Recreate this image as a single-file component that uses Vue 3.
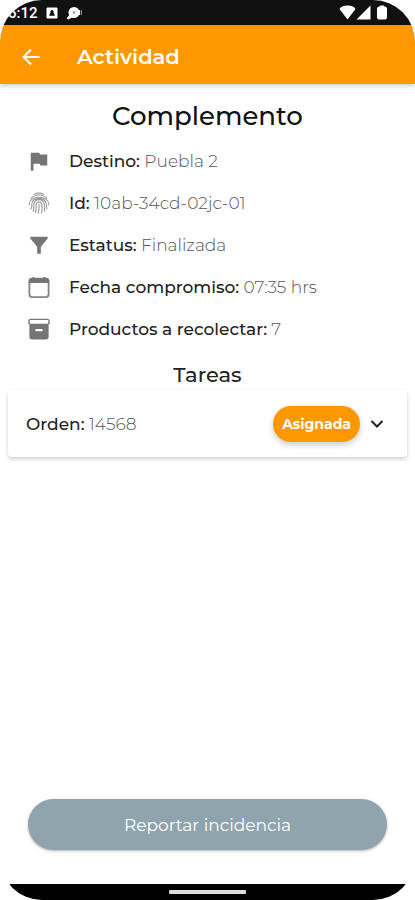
<script setup>
import { ref } from 'vue'

const details = [
  { icon: 'flag', label: 'Destino:', value: 'Puebla 2' },
  { icon: 'finger', label: 'Id:', value: '10ab-34cd-02jc-01' },
  { icon: 'filter', label: 'Estatus:', value: 'Finalizada' },
  { icon: 'calendar', label: 'Fecha compromiso:', value: '07:35 hrs' },
  { icon: 'box', label: 'Productos a recolectar:', value: '7' }
]

const tasks = [{ order: '14568', status: 'Asignada' }]

const opened = ref(null)

const toggle = (order) => {
  opened.value = opened.value === order ? null : order
}
</script>

<template>
  <div class="phone">
    <div class="status-bar">
      <span class="time">6:12</span>
      <svg class="status-icon" viewBox="0 0 12 12" aria-hidden="true">
        <path fill="#fff" fill-rule="evenodd" d="M1.500 0.500h9a1 1 0 0 1 1 1v9a1 1 0 0 1-1 1h-9a1 1 0 0 1-1-1v-9a1 1 0 0 1 1-1zM6 3L4.600 5.200 3 8.800h6L7.400 5.200z" />
        <circle cx="6" cy="4.500" r="1.500" fill="#111" />
      </svg>
      <svg class="status-icon wide" viewBox="0 0 16 14" aria-hidden="true">
        <circle cx="8" cy="6.500" r="5.500" fill="#fff" />
        <path fill="#fff" d="M4 8l-3.500 4.500 2 1L7 11zM12 4h2v5h-2z" />
        <circle cx="8" cy="6.500" r="1.200" fill="#999" />
        <path stroke="#aaa" d="M15.300 4v5" />
      </svg>
      <div class="signals">
        <svg width="17" height="15" viewBox="0 0 17 15" aria-hidden="true">
          <path fill="#fff" d="M8.500 14.500L0.500 4Q2 0.500 8.500 0.500T16.500 4z" />
        </svg>
        <svg width="15" height="15" viewBox="0 0 15 15" aria-hidden="true">
          <path fill="#fff" d="M14.500 0.500v14H0.500z" />
        </svg>
        <svg class="battery" width="10" height="15" viewBox="0 0 10 15" aria-hidden="true">
          <path fill="#fff" d="M3 0.500h4v1h1.500l1.500 1.500v10l-1.500 1.500h-7L0 13V3l1.500-1.500H3z" />
        </svg>
      </div>
    </div>

    <header class="app-bar">
      <button class="back-btn" aria-label="Regresar">
        <svg width="18" height="18" viewBox="0 0 18 18" fill="none" stroke="#fff" stroke-width="2" aria-hidden="true">
          <path d="M17.500 9H2M9 1.500L1.500 9 9 16.500" />
        </svg>
      </button>
      <h1>Actividad</h1>
    </header>

    <main class="content">
      <h2>Complemento</h2>

      <ul class="details">
        <li v-for="item in details" :key="item.icon">
          <svg class="detail-icon" viewBox="0 0 24 24" aria-hidden="true">
            <path v-if="item.icon === 'flag'" fill="#757575" d="M3 3h9.500l.5 2h8v12h-7.500l-.5-2H6v7.500H3z" />
            <g v-else-if="item.icon === 'finger'" fill="none" stroke="#999" stroke-width="1.200" stroke-linecap="round">
              <path d="M7 2.500C10 1 14 1 17 2.500M3.500 7C7 2 17 2 20.500 7M1.500 14C.5 3 23.500 3 22.500 14M3.200 18.500C5 16 3.800 14.500 4.300 12.500 5.500 5.500 18.500 5.500 19.700 12.500c.3 2 .8 4 .8 6M5.500 21c1.500-3 .5-5 1-8.200 1-6 10-6 11 0 .4 3 .8 5 .5 8.200M8 22.500c1.500-3.500.4-6.500 1-9.200.8-3.300 5.200-3.300 6 0 .5 3 .5 6 0 9.500M12 13.500c.2 3.500.3 6-.8 9.500" />
            </g>
            <path v-else-if="item.icon === 'filter'" fill="#757575" d="M2.500 3h19v2L14 14v7.500h-4V14L2.500 5z" />
            <g v-else-if="item.icon === 'calendar'">
              <rect x="1.500" y="3" width="21" height="20" rx="3" fill="#fff" stroke="#858585" stroke-width="2" />
              <path fill="#757575" d="M1 7.500V5q0-2.500 2.500-2.500H5V1h2v1.500h10V1h2v1.500h1.500Q23 2.500 23 5v2.500z" />
            </g>
            <g v-else>
              <rect x="1" y="1.500" width="22" height="5.500" rx="2" fill="#fff" stroke="#757575" stroke-width="1.500" />
              <path fill="#757575" d="M1.500 7h21v13.500q0 3-3 3h-15q-3 0-3-3z" />
              <rect x="8" y="12" width="8" height="2.500" rx="1" fill="#fff" />
            </g>
          </svg>
          <p><strong>{{ item.label }}</strong> {{ item.value }}</p>
        </li>
      </ul>

      <h3>Tareas</h3>

      <section v-for="task in tasks" :key="task.order" class="task-card">
        <p><strong>Orden:</strong> {{ task.order }}</p>
        <span class="badge">{{ task.status }}</span>
        <button
          class="expand-btn"
          aria-label="Ver detalle"
          :aria-expanded="opened === task.order"
          @click="toggle(task.order)"
        >
          <svg width="14" height="10" viewBox="0 0 14 10" fill="none" stroke="#222" stroke-width="2" aria-hidden="true">
            <path d="M1.500 2L7 7.500 12.500 2" />
          </svg>
        </button>
      </section>

      <button class="report-btn">Reportar incidencia</button>
    </main>

    <div class="nav-bar">
      <span class="handle"></span>
    </div>
  </div>
</template>

<style>
body {
  background: #fff;
}
</style>

<style scoped>
.phone {
  min-height: 100vh;
  display: flex;
  flex-direction: column;
  border-radius: 42px;
  overflow: hidden;
  background: #fff;
  color: #111;
  font-family: Montserrat, Inter, sans-serif;
}

h1,
h2,
h3,
p,
ul {
  margin: 0;
  padding: 0;
}

button {
  border: none;
  background: none;
  padding: 0;
  font-family: inherit;
  cursor: pointer;
}

svg {
  display: block;
  flex-shrink: 0;
}

.status-bar {
  height: 25px;
  padding: 0 28px 0 8px;
  display: flex;
  align-items: center;
  background: #111;
  color: #fff;
}

.time {
  font-family: Roboto, sans-serif;
  font-size: 15px;
  font-weight: 500;
  line-height: 24px;
}

.status-icon {
  width: 12px;
  height: 12px;
  margin-left: 8px;
}

.status-icon.wide {
  width: 16px;
  height: 14px;
}

.signals {
  margin-left: auto;
  display: flex;
}

.battery {
  margin-left: 6px;
}

.app-bar {
  height: 59px;
  padding: 4px 20px 0;
  box-sizing: border-box;
  display: flex;
  align-items: center;
  gap: 36px;
  background: #ff9800;
  box-shadow: 0 2px 5px rgba(0, 0, 0, 0.2);
}

.back-btn {
  width: 21px;
  height: 32px;
  display: flex;
  align-items: center;
  justify-content: center;
}

h1 {
  font-size: 21px;
  font-weight: 600;
  line-height: 32px;
  color: #fff;
}

.content {
  flex: 1;
  display: flex;
  flex-direction: column;
  padding: 16px 8px 34px;
}

h2 {
  font-size: 26px;
  font-weight: 500;
  line-height: 32px;
  text-align: center;
}

.details {
  list-style: none;
  padding: 8px 20px 10px;
}

.details li {
  display: flex;
  align-items: center;
  gap: 19px;
  min-height: 42px;
}

.detail-icon {
  width: 22px;
  height: 22px;
}

p {
  font-size: 17px;
  line-height: 24px;
  font-weight: 300;
  color: #555;
}

strong {
  font-weight: 500;
  color: #222;
}

h3 {
  font-size: 21px;
  font-weight: 500;
  line-height: 30px;
  text-align: center;
  color: #222;
}

.task-card {
  display: flex;
  align-items: center;
  min-height: 67px;
  padding: 0 18px;
  border-radius: 4px;
  background: #fff;
  box-shadow: 0 2px 4px rgba(0, 0, 0, 0.2);
}

.badge {
  margin-left: auto;
  padding: 0 9px;
  border-radius: 18px;
  background: #ff9800;
  color: #fff;
  font-size: 14px;
  font-weight: 700;
  line-height: 36px;
  box-shadow: 0 3px 6px rgba(0, 0, 0, 0.2);
}

.expand-btn {
  width: 34px;
  height: 36px;
  display: flex;
  align-items: center;
  justify-content: center;
  margin-right: -5px;
}

.report-btn {
  margin: auto 20px 0;
  min-height: 51px;
  border-radius: 26px;
  background: #90a4ae;
  color: #fff;
  font-size: 17px;
  font-weight: 400;
  box-shadow: 0 1px 3px rgba(0, 0, 0, 0.3);
}

.nav-bar {
  height: 16px;
  display: flex;
  align-items: center;
  justify-content: center;
  background: #000;
}

.handle {
  width: 77px;
  height: 4px;
  border-radius: 1px;
  background: #ddd;
}
</style>
